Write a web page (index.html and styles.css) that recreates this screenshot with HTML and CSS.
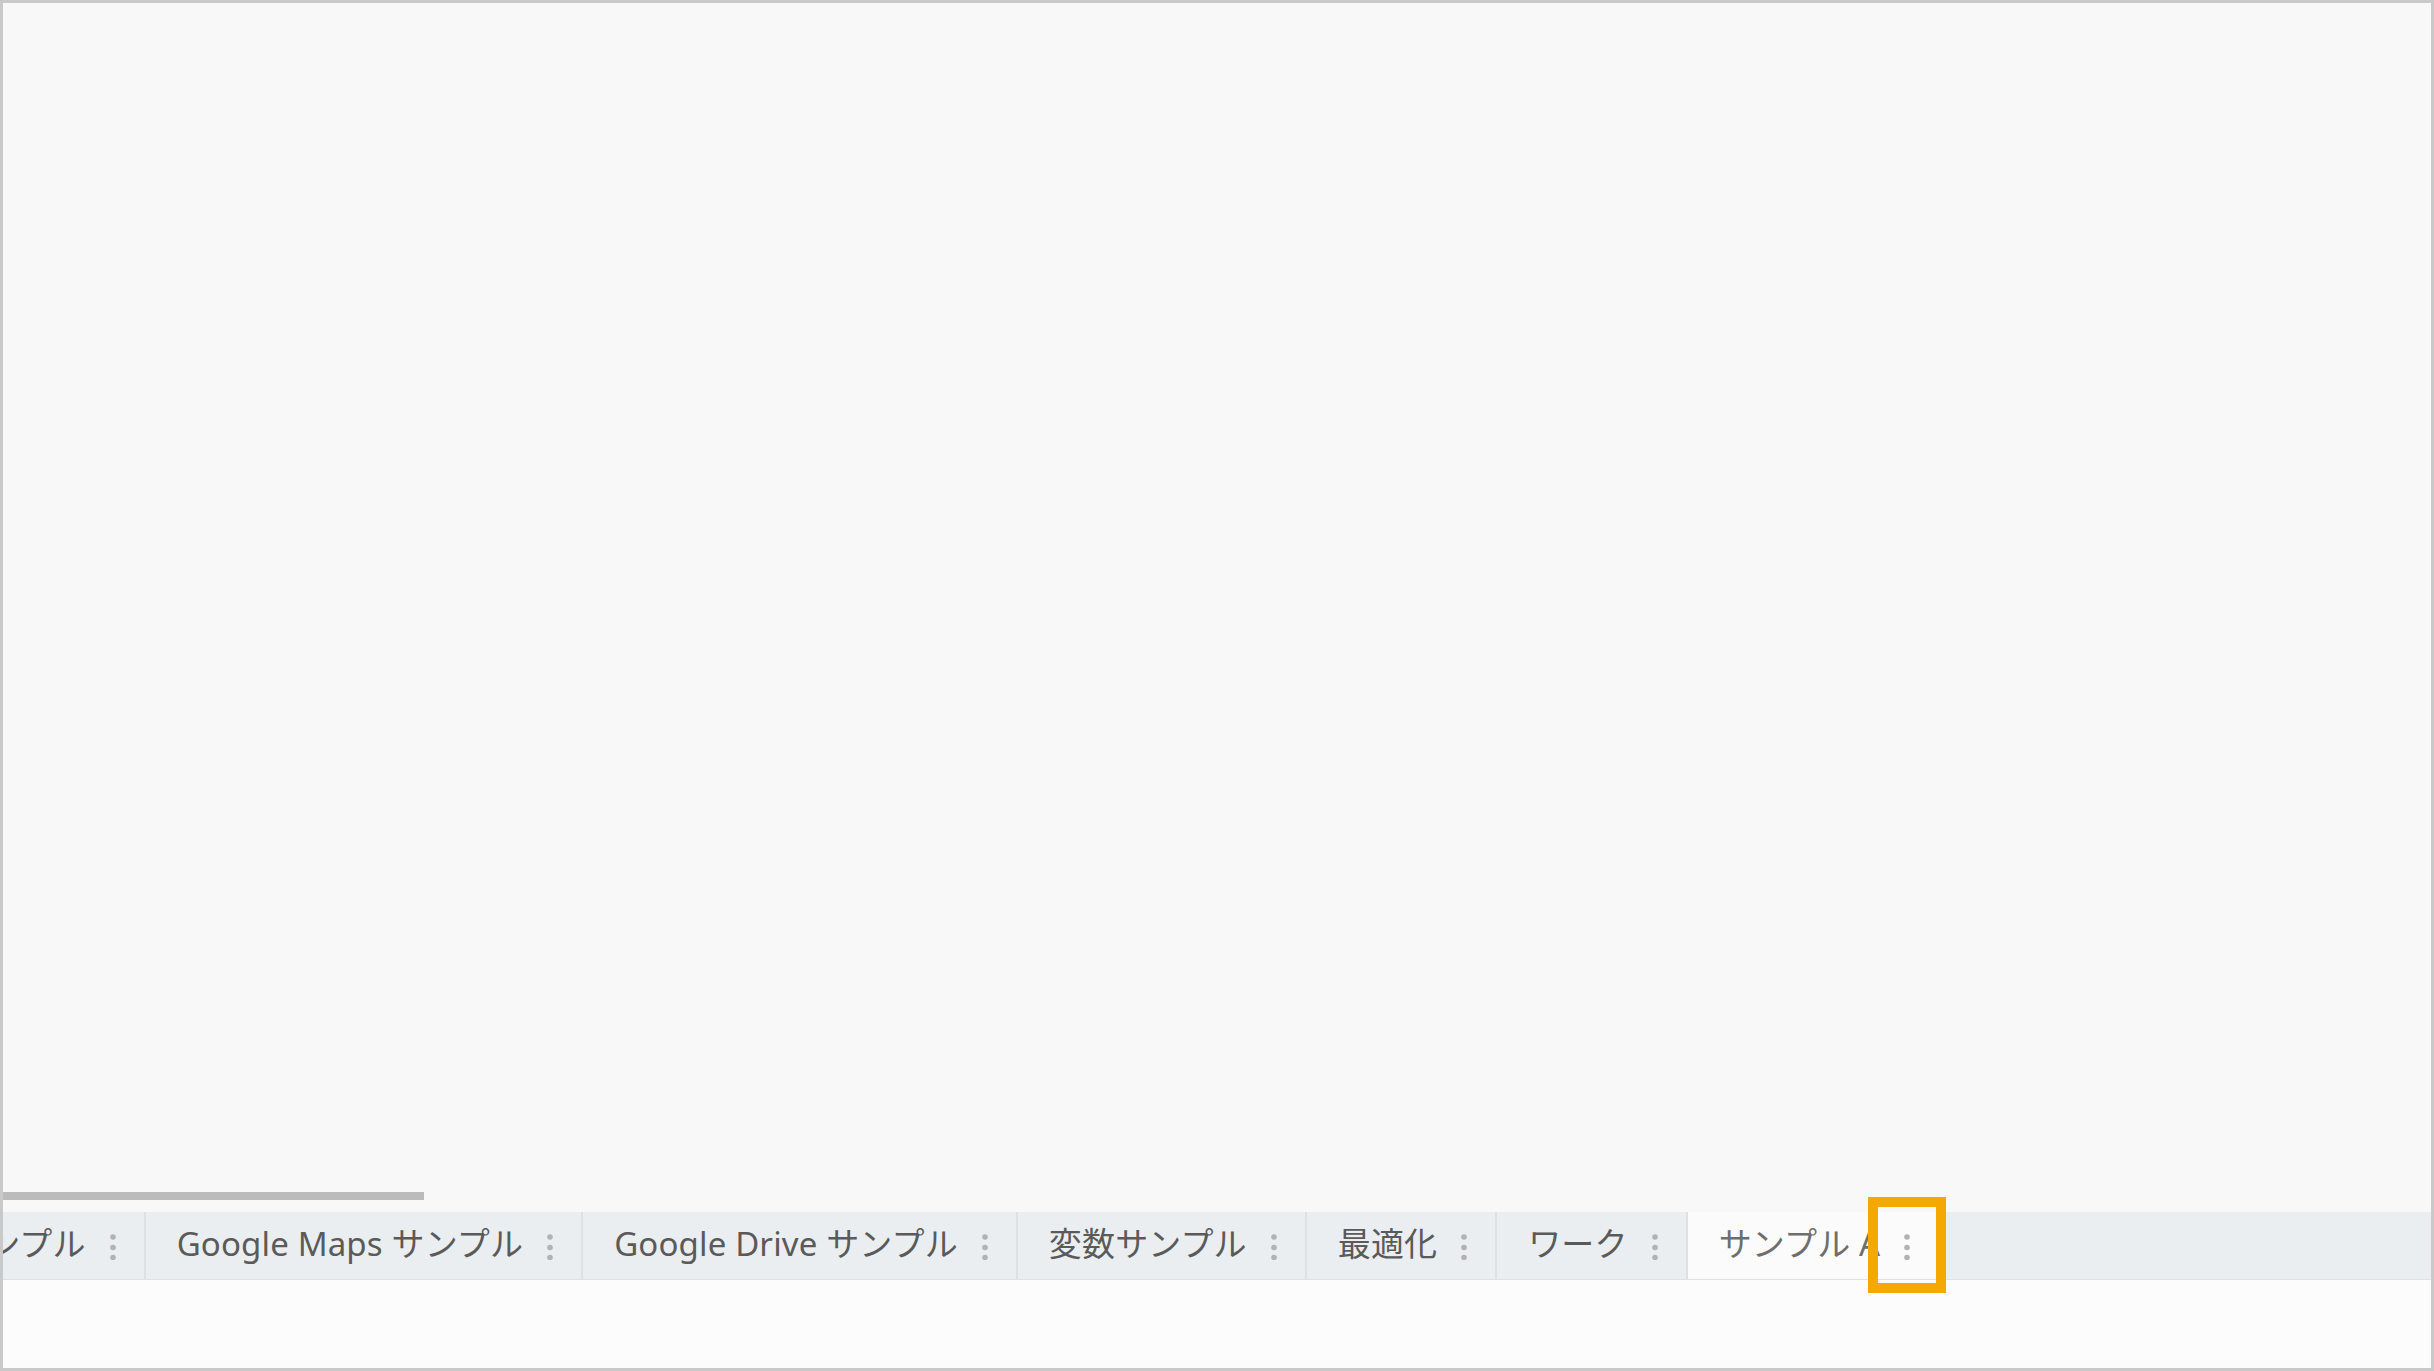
FILE: index.html
```html
<!DOCTYPE html>
<html lang="ja">
<head>
    <meta charset="UTF-8">
    <meta name="viewport" content="width=device-width, initial-scale=1.0">
    <title>シート</title>
    <link rel="stylesheet" href="styles.css">
</head>
<body>
    <div class="frame">
        <div class="canvas"></div>

        <div class="hscroll">
            <div class="hscroll-thumb"></div>
        </div>

        <div class="tabbar">
            <div class="tabs">
                <div class="tab">
                    <span class="tab-name">サンプル</span>
                    <svg class="tab-menu" width="6" height="26" viewBox="0 0 6 26"><circle cx="3" cy="3" r="2.8"/><circle cx="3" cy="13.5" r="2.8"/><circle cx="3" cy="23.5" r="2.8"/></svg>
                </div>
                <div class="tab">
                    <span class="tab-name">Google Maps サンプル</span>
                    <svg class="tab-menu" width="6" height="26" viewBox="0 0 6 26"><circle cx="3" cy="3" r="2.8"/><circle cx="3" cy="13.5" r="2.8"/><circle cx="3" cy="23.5" r="2.8"/></svg>
                </div>
                <div class="tab">
                    <span class="tab-name">Google Drive サンプル</span>
                    <svg class="tab-menu" width="6" height="26" viewBox="0 0 6 26"><circle cx="3" cy="3" r="2.8"/><circle cx="3" cy="13.5" r="2.8"/><circle cx="3" cy="23.5" r="2.8"/></svg>
                </div>
                <div class="tab">
                    <span class="tab-name">変数サンプル</span>
                    <svg class="tab-menu" width="6" height="26" viewBox="0 0 6 26"><circle cx="3" cy="3" r="2.8"/><circle cx="3" cy="13.5" r="2.8"/><circle cx="3" cy="23.5" r="2.8"/></svg>
                </div>
                <div class="tab">
                    <span class="tab-name">最適化</span>
                    <svg class="tab-menu" width="6" height="26" viewBox="0 0 6 26"><circle cx="3" cy="3" r="2.8"/><circle cx="3" cy="13.5" r="2.8"/><circle cx="3" cy="23.5" r="2.8"/></svg>
                </div>
                <div class="tab">
                    <span class="tab-name">ワーク</span>
                    <svg class="tab-menu" width="6" height="26" viewBox="0 0 6 26"><circle cx="3" cy="3" r="2.8"/><circle cx="3" cy="13.5" r="2.8"/><circle cx="3" cy="23.5" r="2.8"/></svg>
                </div>
                <div class="tab active">
                    <span class="tab-name">サンプル A</span>
                    <svg class="tab-menu" width="6" height="26" viewBox="0 0 6 26"><circle cx="3" cy="3" r="2.8"/><circle cx="3" cy="13.5" r="2.8"/><circle cx="3" cy="23.5" r="2.8"/></svg>
                    <div class="highlight"></div>
                </div>
            </div>
        </div>

        <div class="footer"></div>
    </div>
</body>
</html>
```

FILE: styles.css
```css
html, body {
    margin: 0;
    height: 100%;
}

body {
    font-family: "Noto Sans", "Noto Sans CJK JP", sans-serif;
    background: #f8f8f8;
    overflow: hidden;
}

.frame {
    box-sizing: border-box;
    height: 100vh;
    border: 3px solid #c9c9c9;
    display: flex;
    flex-direction: column;
    overflow: hidden;
}

.canvas {
    flex: 1;
    background: #f8f8f8;
}

.hscroll {
    height: 20px;
    background: #f8f8f8;
}

.hscroll-thumb {
    width: 421px;
    height: 8px;
    background: #bbbbbb;
}

.tabbar {
    height: 67px;
    background: #ebeef0;
    border-bottom: 1px solid #dfe2e4;
}

.tabs {
    display: flex;
    height: 100%;
    margin-left: -80px;
}

.tab {
    position: relative;
    display: flex;
    align-items: center;
    gap: 24px;
    padding: 0 28px 0 31px;
    border-right: 2px solid #dde1e4;
    white-space: nowrap;
    font-size: 33px;
    letter-spacing: 0.15px;
    color: #5a5a5a;
}

.tab-name {
    padding-bottom: 7px;
}

.tab-menu {
    fill: #b2b2b2;
    margin-top: 2px;
}

.tab.active {
    background: #fbfbfb;
    color: #6e6e6e;
    border-right: none;
}

.highlight {
    position: absolute;
    top: -15px;
    right: -8px;
    width: 58px;
    height: 76px;
    border: 10px solid #f5a800;
}

.footer {
    height: 88px;
    background: #fcfcfc;
}
```
